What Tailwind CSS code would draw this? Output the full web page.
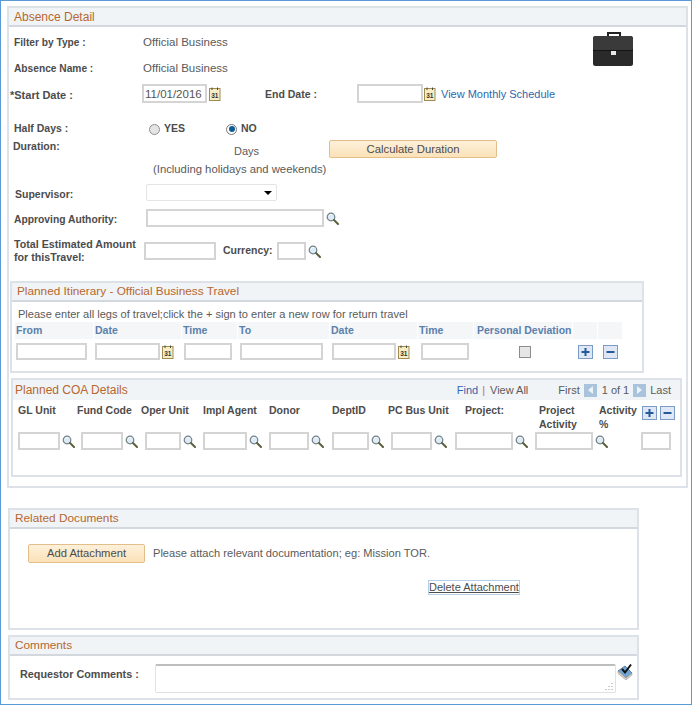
<!doctype html>
<html lang="en">
<head>
<meta charset="UTF-8" />
<title>Absence Detail</title>
<script src="https://cdn.jsdelivr.net/npm/@tailwindcss/browser@4"></script>
</head>
<body class="bg-white">
<svg class="hidden" xmlns="http://www.w3.org/2000/svg">
  <symbol id="lens" viewBox="0 0 13 13">
    <circle cx="5" cy="5" r="3.8" fill="#dcebf5" stroke="#6f7f86" stroke-width="1.2"/>
    <path d="M3 3.6 A2.6 2.6 0 0 1 6 2.6" fill="none" stroke="#fff" stroke-width="1"/>
    <path d="M8 8 L12 12" stroke="#5a5f3c" stroke-width="2" stroke-linecap="round"/>
  </symbol>
  <symbol id="cal" viewBox="0 0 12 14">
    <rect x="0.5" y="1.5" width="10.5" height="12" fill="#f6edc4" stroke="#a08c52"/>
    <path d="M3 0.5V3M8.5 0.5V3" stroke="#4a4a3a" stroke-width="1"/>
    <text x="5.8" y="10.5" text-anchor="middle" font-family="Liberation Sans" font-size="6.5" font-weight="700" fill="#333">31</text>
  </symbol>
  <symbol id="plus" viewBox="0 0 15 14">
    <rect x="0.5" y="0.5" width="14" height="13" fill="#dfe7f4" stroke="#7c9cc8"/>
    <path d="M3.5 7H11.5M7.5 3V11" stroke="#245a9c" stroke-width="2"/>
  </symbol>
  <symbol id="minus" viewBox="0 0 15 14">
    <rect x="0.5" y="0.5" width="14" height="13" fill="#dfe7f4" stroke="#7c9cc8"/>
    <path d="M3.5 7H11.5" stroke="#245a9c" stroke-width="2"/>
  </symbol>
</svg>

<div class="w-[692px] h-[705px] overflow-hidden border border-[#5b9bd5] font-['Liberation_Sans',Arial,sans-serif] text-[11.5px] text-[#5a5a5a]">

  <!-- absence detail -->
  <section class="ml-[6px] mt-[5px] w-[681px] h-[482px] border-2 border-[#dde2e8]">
    <div class="h-[19px] flex items-center pl-[5px] bg-[#f1f4f6] border-b-2 border-[#d3d8de] text-[12px] text-[#b5672f]">Absence Detail</div>

    <div class="relative">
      <svg class="absolute left-[584px] -top-[1px] w-[41px] h-[36px]" viewBox="0 0 41 36">
        <path d="M15 5V1h12v4" fill="none" stroke="#222" stroke-width="2"/>
        <rect x="0" y="4" width="40" height="30" rx="2.5" fill="#2a2a2a"/>
        <rect x="0" y="4" width="40" height="14" rx="2.5" fill="#3a3a3a"/>
        <path d="M0 18.5H40" stroke="#151515"/>
        <rect x="18" y="19" width="5" height="4" fill="#e8e8e8"/>
      </svg>

      <div class="flex items-center h-[20px] mt-[6px] pl-[5px]">
        <label class="w-[129px] font-bold text-[#4c4c4c] text-[10.2px]">Filter by Type :</label>
        <span>Official Business</span>
      </div>
      <div class="flex items-center h-[20px] mt-[6px] pl-[5px]">
        <label class="w-[129px] font-bold text-[#4c4c4c] text-[10.2px]">Absence Name :</label>
        <span>Official Business</span>
      </div>
      <div class="flex items-center h-[19px] mt-[5px] pl-[1px]">
        <label class="w-[132px] pt-[3px] font-bold text-[#4c4c4c] text-[11px]">*Start Date :</label>
        <input value="11/01/2016" class="w-[65px] h-[19px] px-[1px] border-2 border-[#d4d4d4] text-[11.5px] text-[#555]" />
        <svg class="w-[12px] h-[14px] ml-[2px]"><use href="#cal"/></svg>
        <label class="ml-[44px] w-[92px] pt-[3px] font-bold text-[#4c4c4c] text-[10.5px]">End Date :</label>
        <input class="w-[66px] h-[19px] border-2 border-[#d4d4d4]" />
        <svg class="w-[12px] h-[14px] ml-[1px]"><use href="#cal"/></svg>
        <a class="ml-[5px] pt-[1px] text-[11px] text-[#2f66ae]">View Monthly Schedule</a>
      </div>

      <div class="flex items-center h-[16px] mt-[18px] pl-[5px]">
        <label class="w-[135px] font-bold text-[#4c4c4c] text-[10.5px]">Half Days :</label>
        <span class="w-[11px] h-[11px] rounded-full border border-[#8f8f8f] bg-[#e4e4e4]"></span>
        <span class="ml-[4px] w-[62px] font-bold text-[#4c4c4c] text-[10.5px]">YES</span>
        <span class="w-[11px] h-[11px] rounded-full border border-[#777] bg-white flex items-center justify-center"><span class="w-[6px] h-[6px] rounded-full bg-[#0f5c94]"></span></span>
        <span class="ml-[4px] font-bold text-[#4c4c4c] text-[10.5px]">NO</span>
      </div>

      <div class="relative h-[18px] mt-[3px] pl-[4px]">
        <label class="absolute left-[4px] -top-[1px] font-bold text-[#4c4c4c] text-[10.5px] leading-[14px]">Duration:</label>
        <span class="absolute left-[225px] top-[3px] text-[11px]">Days</span>
        <button class="absolute left-[320px] top-0 w-[168px] h-[18px] rounded-[2px] border border-[#e3bd8a] bg-linear-to-b from-[#fdf0da] to-[#fbe2b8] text-[11.3px] text-[#4c4c4c]">Calculate Duration</button>
      </div>
      <div class="h-[14px] mt-[4px] pl-[144px] leading-[14px] text-[11.3px]">(Including holidays and weekends)</div>

      <div class="flex items-center h-[17px] mt-[8px] pl-[6px]">
        <label class="w-[131px] pt-[4px] font-bold text-[#4c4c4c] text-[10.5px]">Supervisor:</label>
        <div class="w-[131px] h-[17px] border border-[#e4e4e4] rounded-[2px] flex items-center justify-end pr-[3px]">
          <span class="w-0 h-0 border-x-[4px] border-x-transparent border-t-[4px] border-t-black mr-[1px]"></span>
        </div>
      </div>

      <div class="flex items-center h-[18px] mt-[8px] pl-[5px]">
        <label class="w-[132px] pt-[3px] font-bold text-[#4c4c4c] text-[10.3px]">Approving Authority:</label>
        <input class="w-[178px] h-[18px] border-2 border-[#d4d4d4]" />
        <svg class="w-[13px] h-[13px] ml-[2px]"><use href="#lens"/></svg>
      </div>

      <div class="flex items-center h-[28px] mt-[10px] pl-[5px]">
        <label class="w-[130px] font-bold text-[#4c4c4c] text-[10.7px] leading-[13px]">Total Estimated Amount for thisTravel:</label>
        <input class="w-[72px] h-[18px] border-2 border-[#d4d4d4]" />
        <label class="ml-[7px] w-[53px] font-bold text-[#4c4c4c] text-[10.5px]">Currency:</label>
        <input class="ml-[1px] w-[29px] h-[18px] border-2 border-[#d4d4d4]" />
        <svg class="w-[13px] h-[13px] ml-[2px]"><use href="#lens"/></svg>
      </div>

      <!-- itinerary -->
      <div class="ml-[1px] mt-[16px] w-[634px] h-[92px] border-2 border-[#dde2e8]">
        <div class="h-[19px] flex items-center pl-[5px] bg-[#f1f4f6] border-b-2 border-[#d3d8de] text-[11.8px] text-[#b5672f]">Planned Itinerary - Official Business Travel</div>
        <div class="h-[14px] mt-[5px] pl-[6px] leading-[14px] text-[11.05px]">Please enter all legs of travel;click the + sign to enter a new row for return travel</div>
        <div class="flex gap-[1px] ml-[3px] mt-[1px] h-[17px] text-[10.5px] font-bold text-[#5a80ad] whitespace-nowrap">
          <div class="w-[78px] bg-[#f5f6f7] pl-[1px] leading-[17px]">From</div>
          <div class="w-[87px] bg-[#f5f6f7] pl-[1px] leading-[17px]">Date</div>
          <div class="w-[55px] bg-[#f5f6f7] pl-[1px] leading-[17px]">Time</div>
          <div class="w-[91px] bg-[#f5f6f7] pl-[1px] leading-[17px]">To</div>
          <div class="w-[87px] bg-[#f5f6f7] pl-[1px] leading-[17px]">Date</div>
          <div class="w-[55px] bg-[#f5f6f7] pl-[1px] leading-[17px]">Time</div>
          <div class="w-[98px] bg-[#f5f6f7] pl-[3px] leading-[17px]">Personal Deviation</div>
          <div class="w-[24px] bg-[#f5f6f7]"></div>
          <div class="w-[24px] bg-[#f5f6f7]"></div>
        </div>
        <div class="flex items-center ml-[4px] mt-[4px] h-[17px]">
          <input class="w-[71px] h-[17px] border-2 border-[#d4d4d4]" />
          <input class="ml-[8px] w-[65px] h-[17px] border-2 border-[#d4d4d4]" />
          <svg class="ml-[2px] w-[12px] h-[14px]"><use href="#cal"/></svg>
          <input class="ml-[10px] w-[48px] h-[17px] border-2 border-[#d4d4d4]" />
          <input class="ml-[8px] w-[83px] h-[17px] border-2 border-[#d4d4d4]" />
          <input class="ml-[9px] w-[64px] h-[17px] border-2 border-[#d4d4d4]" />
          <svg class="ml-[2px] w-[12px] h-[14px]"><use href="#cal"/></svg>
          <input class="ml-[11px] w-[48px] h-[17px] border-2 border-[#d4d4d4]" />
          <span class="ml-[50px] w-[12px] h-[12px] border border-[#8d8d8d] bg-[#e6e6e6]"></span>
          <svg class="ml-[47px] w-[15px] h-[14px]"><use href="#plus"/></svg>
          <svg class="ml-[10px] w-[15px] h-[14px]"><use href="#minus"/></svg>
        </div>
      </div>

      <!-- coa -->
      <div class="ml-[2px] mt-[5px] w-[671px] h-[99px] border-2 border-[#dde2e8]">
        <div class="h-[20px] flex items-center pl-[2px] bg-[#f1f4f6] whitespace-nowrap text-[11px]">
          <span class="text-[12px] text-[#b5672f]">Planned COA Details</span>
          <a class="ml-[329px] text-[#2f66ae]">Find</a>
          <span class="ml-[4px] mr-[5px] text-[#c0704a]">|</span>
          <span>View All</span>
          <span class="ml-[30px]">First</span>
          <span class="ml-[4px] w-[13px] h-[13px] bg-[#a9c3dd] flex items-center justify-center"><span class="w-0 h-0 border-y-[4px] border-y-transparent border-r-[5px] border-r-[#eef3f8]"></span></span>
          <span class="ml-[5px]">1 of 1</span>
          <span class="ml-[4px] w-[13px] h-[13px] bg-[#a9c3dd] flex items-center justify-center"><span class="w-0 h-0 border-y-[4px] border-y-transparent border-l-[5px] border-l-[#eef3f8]"></span></span>
          <span class="ml-[4px]">Last</span>
        </div>
        <div class="flex mt-[3px] h-[27px] pl-[5px] text-[10.5px] font-bold text-[#4c4c4c] leading-[14px]">
          <div class="w-[59px]">GL Unit</div>
          <div class="w-[64px]">Fund Code</div>
          <div class="w-[62px]">Oper Unit</div>
          <div class="w-[66px]">Impl Agent</div>
          <div class="w-[63px]">Donor</div>
          <div class="w-[56px]">DeptID</div>
          <div class="w-[77px]">PC Bus Unit</div>
          <div class="w-[74px]">Project:</div>
          <div class="w-[60px]">Project Activity</div>
          <div class="w-[43px]">Activity %</div>
          <svg class="mt-[3px] w-[15px] h-[14px]"><use href="#plus"/></svg>
          <svg class="mt-[3px] ml-[3px] w-[15px] h-[14px]"><use href="#minus"/></svg>
        </div>
        <div class="flex items-center mt-[2px] h-[18px] pl-[5px]">
          <input class="w-[42px] h-[18px] border-2 border-[#d4d4d4]" /><svg class="ml-[2px] w-[13px] h-[13px]"><use href="#lens"/></svg>
          <input class="ml-[6px] w-[42px] h-[18px] border-2 border-[#d4d4d4]" /><svg class="ml-[2px] w-[13px] h-[13px]"><use href="#lens"/></svg>
          <input class="ml-[7px] w-[36px] h-[18px] border-2 border-[#d4d4d4]" /><svg class="ml-[2px] w-[13px] h-[13px]"><use href="#lens"/></svg>
          <input class="ml-[7px] w-[44px] h-[18px] border-2 border-[#d4d4d4]" /><svg class="ml-[2px] w-[13px] h-[13px]"><use href="#lens"/></svg>
          <input class="ml-[7px] w-[40px] h-[18px] border-2 border-[#d4d4d4]" /><svg class="ml-[2px] w-[13px] h-[13px]"><use href="#lens"/></svg>
          <input class="ml-[8px] w-[37px] h-[18px] border-2 border-[#d4d4d4]" /><svg class="ml-[2px] w-[13px] h-[13px]"><use href="#lens"/></svg>
          <input class="ml-[7px] w-[41px] h-[18px] border-2 border-[#d4d4d4]" /><svg class="ml-[2px] w-[13px] h-[13px]"><use href="#lens"/></svg>
          <input class="ml-[8px] w-[58px] h-[18px] border-2 border-[#d4d4d4]" /><svg class="ml-[2px] w-[13px] h-[13px]"><use href="#lens"/></svg>
          <input class="ml-[7px] w-[58px] h-[18px] border-2 border-[#d4d4d4]" /><svg class="ml-[2px] w-[13px] h-[13px]"><use href="#lens"/></svg>
          <input class="ml-[33px] w-[30px] h-[18px] border-2 border-[#d4d4d4]" />
        </div>
      </div>
    </div>
  </section>

  <!-- related documents -->
  <section class="relative ml-[7px] mt-[20px] w-[631px] h-[122px] border-2 border-[#dde2e8]">
    <div class="h-[19px] flex items-center pl-[5px] pt-[1px] bg-[#f1f4f6] border-b-2 border-[#d3d8de] text-[11.8px] text-[#b5672f]">Related Documents</div>
    <div class="flex items-center mt-[15px] ml-[18px] h-[19px]">
      <button class="w-[117px] h-[19px] rounded-[2px] border border-[#e3bd8a] bg-linear-to-b from-[#fdf0da] to-[#fbe2b8] text-[11.2px] text-[#4c4c4c]">Add Attachment</button>
      <span class="ml-[8px] text-[11.1px]">Please attach relevant documentation; eg: Mission TOR.</span>
    </div>
    <a class="block w-fit ml-[418px] mt-[17px] h-[15px] leading-[13px] border border-[#b5cfe8] underline text-[11px] text-[#4c4c4c]">Delete Attachment</a>
  </section>

  <!-- comments -->
  <section class="ml-[7px] mt-[5px] w-[631px] h-[65px] border-2 border-[#dde2e8]">
    <div class="h-[19px] flex items-center pl-[5px] pt-[1px] bg-[#f1f4f6] border-b-2 border-[#d3d8de] text-[11.8px] text-[#b5672f]">Comments</div>
    <div class="flex items-start mt-[8px] pl-[10px]">
      <label class="w-[135px] mt-[2px] font-bold text-[#4c4c4c] text-[10.8px]">Requestor Comments :</label>
      <div class="relative w-[461px] h-[29px] border border-[#e2e2e2] border-t-[#bdbdbd] border-t-2 rounded-[2px]">
        <svg class="absolute right-[2px] bottom-[2px] w-[8px] h-[8px]" viewBox="0 0 8 8"><path d="M7 1v1M4 4v1M7 4v1M1 7v1M4 7v1M7 7v1" stroke="#999"/></svg>
      </div>
      <svg class="w-[16px] h-[17px] -mt-[1px] ml-[1px]" viewBox="0 0 16 17">
        <path d="M1 8 L8 3 L15 10 L9 15 Z" fill="#6fa6d6" stroke="#5b7fa0"/>
        <path d="M1 8 V10.5 L9 17 L15 12 V10 L9 15 Z" fill="#d9d2c4" stroke="#9a9a9a" stroke-width="0.6"/>
        <path d="M5 6 L8 9.5 L14 1.5" fill="none" stroke="#111" stroke-width="2"/>
      </svg>
    </div>
  </section>
</div>
</body>
</html>
